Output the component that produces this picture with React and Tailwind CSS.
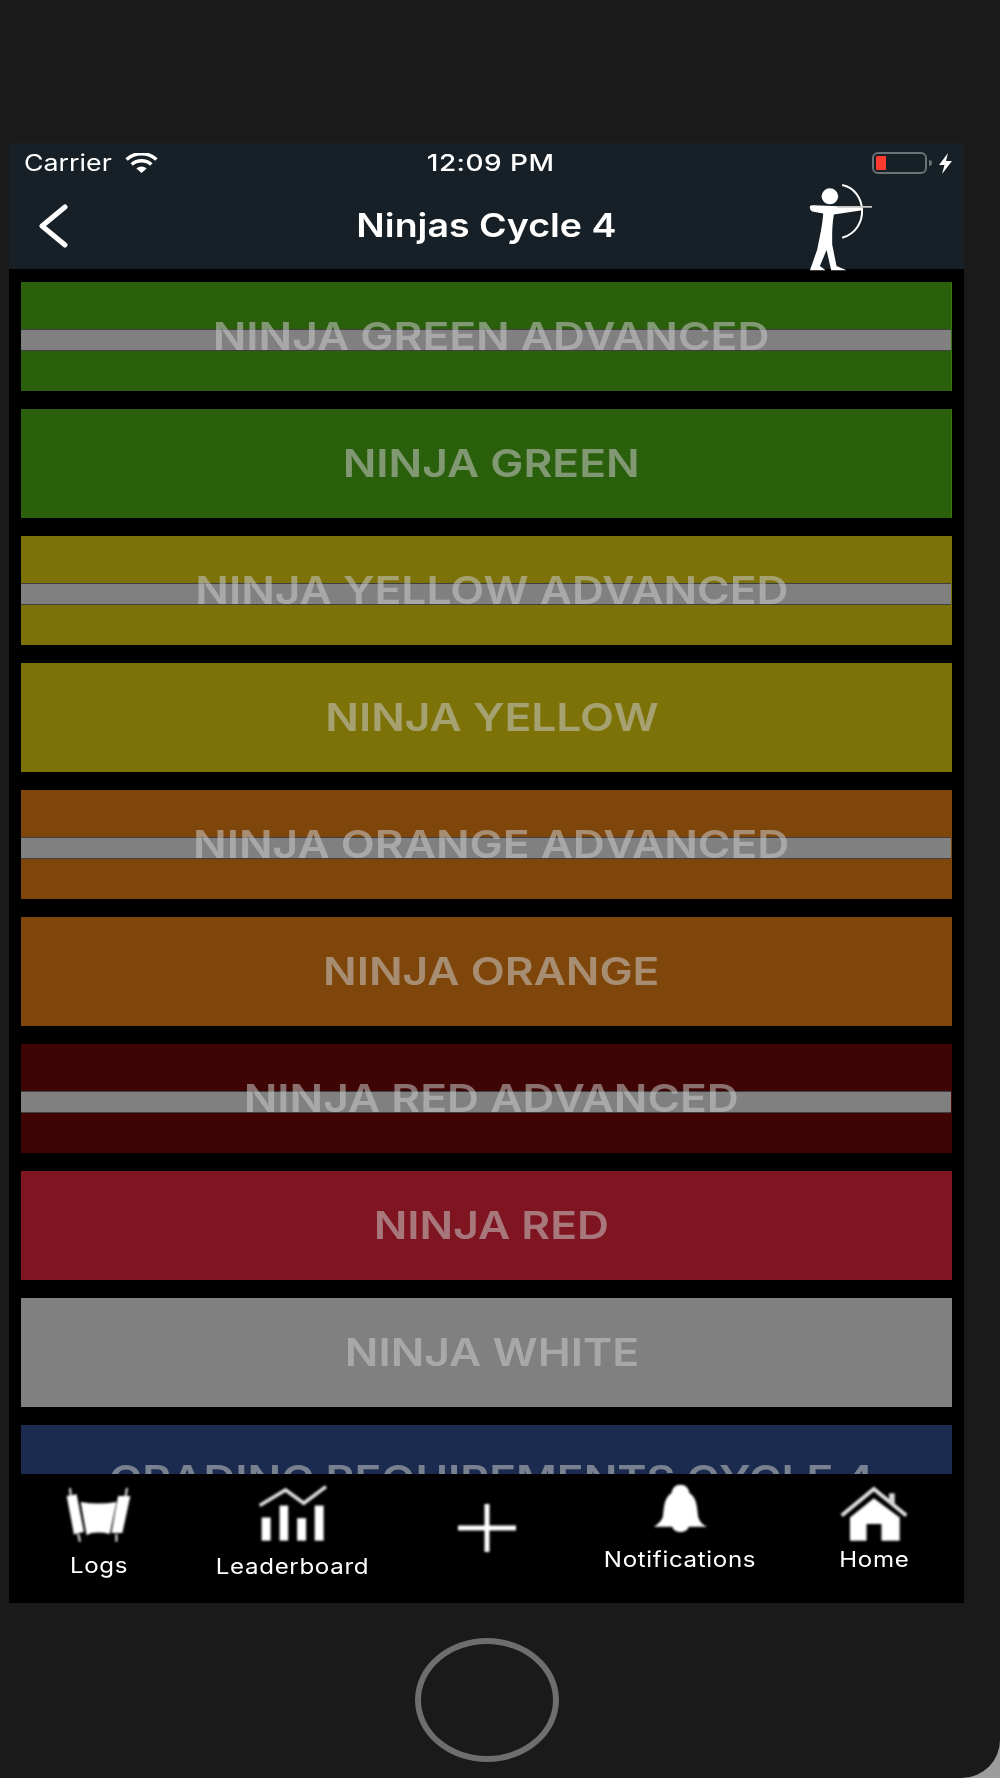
const bands = [
  { name: 'NINJA GREEN ADVANCED', bg: 'bg-[#2a5f0b]', striped: true, edge: 'border-[#3c7510]' },
  { name: 'NINJA GREEN', bg: 'bg-[#2a5f0b]', edge: 'border-[#3c7510]' },
  { name: 'NINJA YELLOW ADVANCED', bg: 'bg-[#7c7208]', striped: true, edge: 'border-[#7c7208]' },
  { name: 'NINJA YELLOW', bg: 'bg-[#7c7208]', edge: 'border-[#7c7208]' },
  { name: 'NINJA ORANGE ADVANCED', bg: 'bg-[#7f460b]', striped: true, edge: 'border-[#7f460b]' },
  { name: 'NINJA ORANGE', bg: 'bg-[#7f460b]', edge: 'border-[#7f460b]' },
  { name: 'NINJA RED ADVANCED', bg: 'bg-[#3f0504]', striped: true, edge: 'border-[#3f0504]' },
  { name: 'NINJA RED', bg: 'bg-[#7f1520]', edge: 'border-[#7f1520]' },
  { name: 'NINJA WHITE', bg: 'bg-[#808080]', edge: 'border-[#808080]' },
  { name: 'GRADING REQUIREMENTS CYCLE 4', bg: 'bg-[#1a2b4f]', edge: 'border-[#1a2b4f]' },
];

function Band({ band }) {
  return (
    <div className={`relative flex h-[109px] flex-none flex-col border-r ${band.bg} ${band.edge}`}>
      {band.striped && (
        <div className="mt-[47px] h-[22px] border-y border-black/50 bg-[#808080]"></div>
      )}
      <div className="absolute inset-0 flex items-center justify-center pl-[11px] text-[38.5px] font-semibold text-[#c8c8c8]/55 whitespace-nowrap">
        <span className="inline-block scale-x-[1.15]">{band.name}</span>
      </div>
    </div>
  );
}

function Wifi() {
  return (
    <svg width="33" height="20" viewBox="0 0 32 20" preserveAspectRatio="none" fill="none" stroke="white" strokeWidth="3.4" className="block">
      <path d="M1.5 6.5 A21 21 0 0 1 30.5 6.5" />
      <path d="M6.5 11.5 A14 14 0 0 1 25.5 11.5" />
      <path d="M11 15.5 A7.5 7.5 0 0 1 21 15.5 L16 20 Z" fill="white" stroke="none" />
    </svg>
  );
}

function Archer() {
  return (
    <svg width="67" height="88" viewBox="50 30 200 265" className="block blur-[0.5px]">
      <ellipse cx="118" cy="70" rx="25" ry="24" fill="white" />
      <path
        d="M58 100 Q60 96 70 97 L215 103 L215 112 L130 125 C124 160 125 190 125 215 L138 280 L168 293 L122 293 L108 232 L88 280 L105 293 L58 293 L80 230 C88 190 95 160 98 122 L65 116 Q56 110 58 100 Z"
        fill="white"
      />
      <path d="M155 36 C230 50 240 170 155 195" fill="none" stroke="white" strokeWidth="6" />
      <path d="M140 102 L245 102" stroke="#c4c4c4" strokeWidth="5" />
    </svg>
  );
}

function ScrollIcon() {
  return (
    <svg width="68" height="58" viewBox="35 30 205 175" className="block blur-[0.8px]">
      <path d="M40 60 L70 55 L92 168 L62 176 Z" fill="white" />
      <path d="M195 60 L232 60 L208 172 L175 172 Z" fill="white" />
      <path d="M82 78 Q135 88 190 78 L170 175 Q125 165 100 178 Z" fill="white" />
      <path d="M50 36 L52 60 M75 175 L80 198 M222 36 L218 60 M190 175 L190 198" stroke="#cfcfcf" strokeWidth="7" />
    </svg>
  );
}

function ChartIcon() {
  return (
    <svg width="72" height="58" viewBox="605 30 215 175" className="block blur-[0.8px]">
      <rect x="618" y="128" width="27" height="70" fill="white" />
      <rect x="672" y="92" width="26" height="106" fill="white" />
      <rect x="725" y="130" width="27" height="68" fill="white" />
      <rect x="778" y="92" width="27" height="106" fill="white" />
      <path d="M612 92 L690 45 L745 85 L812 35" fill="none" stroke="#dedede" strokeWidth="11" />
    </svg>
  );
}

function BellIcon() {
  return (
    <svg width="57" height="53" viewBox="90 25 170 160" className="block blur-[0.8px]">
      <path
        d="M175 30 C160 30 150 40 148 55 C125 70 125 100 122 125 C118 140 105 150 95 157 L150 157 C155 178 195 178 200 157 L255 157 C240 150 232 140 228 125 C225 100 225 70 202 55 C200 40 190 30 175 30 Z"
        fill="white"
      />
    </svg>
  );
}

function HomeIcon() {
  return (
    <svg width="72" height="58" viewBox="655 30 215 175" className="block blur-[0.8px]">
      <path d="M690 128 L762 70 L840 128 L840 198 L785 198 L785 148 L740 148 L740 198 L690 198 Z" fill="white" />
      <path d="M665 122 L762 42 L860 122" fill="none" stroke="#e4e4e4" strokeWidth="11" />
      <rect x="808" y="55" width="17" height="32" fill="#d8d8d8" />
    </svg>
  );
}

function PlusIcon() {
  return (
    <svg width="58" height="48" viewBox="0 0 58 48" className="block blur-[1px]">
      <path d="M0 24 L58 24 M29 0 L29 48" stroke="white" strokeWidth="5" />
    </svg>
  );
}

function TabLabel({ children, className }) {
  return <span className={`inline-block scale-x-[1.12] ${className}`}>{children}</span>;
}

export default function App() {
  return (
    <div className="h-[1778px] w-full overflow-hidden bg-[#9c9c9c] font-['Inter','Liberation_Sans',sans-serif]">
      <div className="flex h-full flex-col items-start rounded-br-[38px] bg-[#1a1a1a] pl-[9px] pt-[143px]">
        <div className="flex h-[1460px] w-[955px] flex-none flex-col overflow-hidden bg-black">
          <div className="flex-none bg-[#162026] text-white">
            <div className="grid h-[40px] grid-cols-3 items-center">
              <div className="flex items-center gap-[27px] pl-[15px] text-[22.5px]">
                <span className="inline-block origin-left scale-x-[1.19]">Carrier</span>
                <Wifi />
              </div>
              <div className="pl-[9px] text-center text-[23.5px] font-medium tracking-[0.4px]">
                <span className="inline-block scale-x-[1.19]">12:09 PM</span>
              </div>
              <div className="flex items-center justify-end pr-[11px]">
                <div className="flex h-[22px] w-[55px] items-center rounded-[6px] border-2 border-[#6b7276] pl-[2px]">
                  <div className="h-[14px] w-[10px] rounded-[1px] bg-[#ff3b30]"></div>
                </div>
                <div className="ml-[2px] h-[6px] w-[3px] rounded-r-full bg-[#6b7276]"></div>
                <svg width="15" height="21" viewBox="0 0 15 21" className="ml-[6px] block">
                  <path d="M10 0 L1 12 L6.5 12 L4 21 L14 8 L8 8 Z" fill="white" />
                </svg>
              </div>
            </div>
            <div className="grid h-[86px] grid-cols-3 items-center">
              <div className="pl-[29px]">
                <svg width="30" height="44" viewBox="0 0 30 44" fill="none" stroke="white" strokeWidth="5" strokeLinecap="round" strokeLinejoin="round" className="block -translate-y-[1px]">
                  <path d="M27 3 L4 22 L27 41" />
                </svg>
              </div>
              <div className="-mt-[2px] whitespace-nowrap text-center text-[33px] font-semibold">
                <span className="inline-block scale-x-[1.137]">Ninjas Cycle 4</span>
              </div>
              <div className="flex justify-end self-end pr-[90px]">
                <Archer />
              </div>
            </div>
          </div>
          <div className="flex min-h-0 flex-1 flex-col gap-[18px] overflow-hidden px-[12px] pt-[13px]">
            {bands.map((band) => (
              <Band key={band.name} band={band} />
            ))}
          </div>
          <div className="flex h-[129px] flex-none justify-between bg-black px-[10px] text-[21.5px] tracking-[0.6px] text-white">
            <div className="flex w-[160px] flex-col items-center pt-[12px]">
              <ScrollIcon />
              <TabLabel className="mt-[5px]">Logs</TabLabel>
            </div>
            <div className="flex w-[160px] flex-col items-center pt-[11px]">
              <ChartIcon />
              <TabLabel className="mt-[7px]">Leaderboard</TabLabel>
            </div>
            <div className="flex w-[160px] flex-col items-center pt-[30px]">
              <PlusIcon />
            </div>
            <div className="flex w-[160px] flex-col items-center pt-[9px]">
              <BellIcon />
              <TabLabel className="mt-[7px]">Notifications</TabLabel>
            </div>
            <div className="flex w-[160px] flex-col items-center pt-[11px]">
              <HomeIcon />
              <TabLabel className="mt-[0px]">Home</TabLabel>
            </div>
          </div>
        </div>
        <div className="ml-[406px] mt-[35px] h-[124px] w-[144px] flex-none rounded-[50%] border-[6px] border-[#6e6e6e]"></div>
      </div>
    </div>
  );
}
